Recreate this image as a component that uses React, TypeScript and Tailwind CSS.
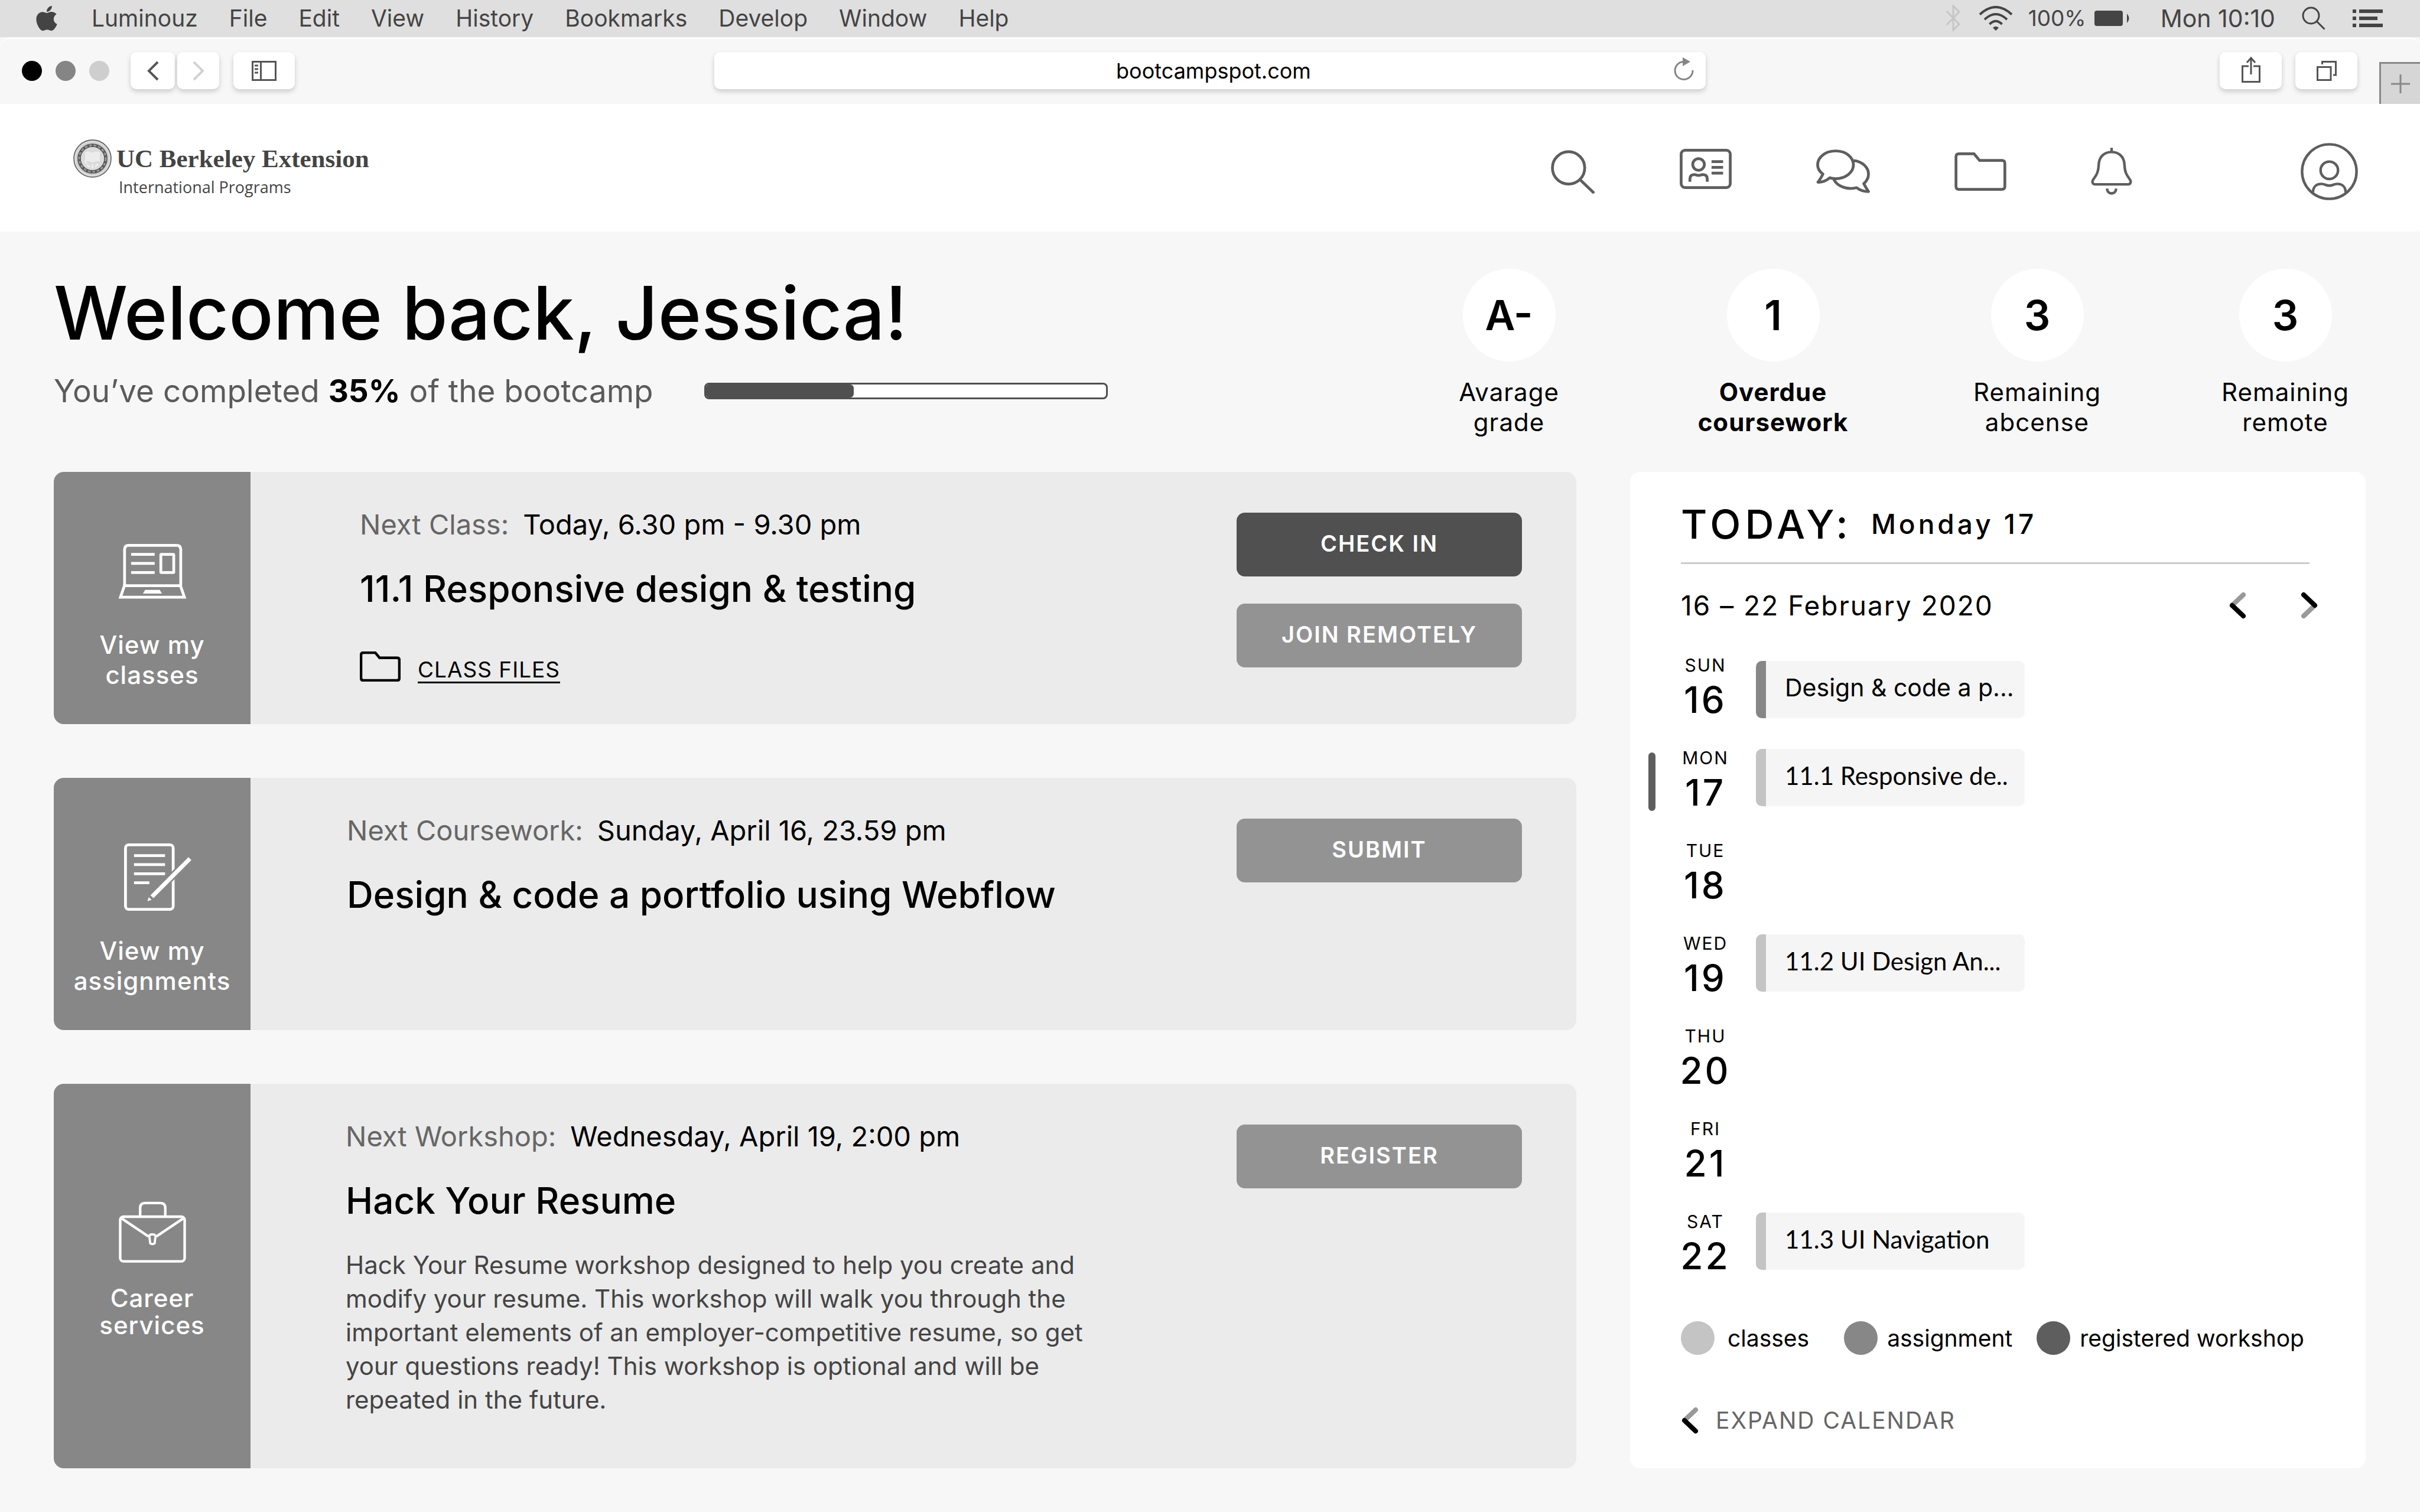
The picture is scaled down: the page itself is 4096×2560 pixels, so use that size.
import type { ReactNode } from 'react';
import { FaApple } from 'react-icons/fa';

const MENUS = ['File', 'Edit', 'View', 'History', 'Bookmarks', 'Develop', 'Window', 'Help'];

const DAYS = [
  { day: 'SUN', date: '16', event: 'Design & code a p...', kind: 'assignment' },
  { day: 'MON', date: '17', event: '11.1 Responsive de..', kind: 'class', current: true },
  { day: 'TUE', date: '18' },
  { day: 'WED', date: '19', event: '11.2 UI Design An...', kind: 'class' },
  { day: 'THU', date: '20' },
  { day: 'FRI', date: '21' },
  { day: 'SAT', date: '22', event: '11.3 UI Navigation', kind: 'class' },
];

const FOLDER =
  'M8 2.6H35L45 14.5H85q5.4 0 5.4 5.4V61q0 5.4-5.4 5.4H8q-5.4 0-5.4-5.4V8q0-5.4 5.4-5.4Z';

function MenuBar() {
  return (
    <div className="flex h-[63px] items-center bg-[#dfdfdf] pb-[2px] pl-[59px] pr-[63px] text-[39px] leading-[60px] text-[#444]">
      <FaApple className="mr-[56px] h-[48px] w-[40px]" />
      <nav className="flex gap-[53px]">
        <span>Luminouz</span>
        {MENUS.map((m) => (
          <button key={m} type="button">{m}</button>
        ))}
      </nav>
      <div className="ml-auto flex items-center">
        <svg className="h-[45px] w-[26px] text-[#c6c6c6]" viewBox="0 0 26 45" fill="none" stroke="currentColor" strokeWidth="3">
          <path d="M2 11L23 33L13 43V2L23 12L2 34" />
        </svg>
        <svg className="ml-[30px] h-[42px] w-[58px]" viewBox="0 0 58 42" fill="none" stroke="currentColor" strokeWidth="4">
          <path d="M2 14.5Q29-10.500 56 14.500M10 23Q29 5 48 23M18.500 31Q29 20.500 39.500 31" />
          <path d="M29 42l-5-5q5-4.500 10 0z" fill="currentColor" stroke="none" />
        </svg>
        <span className="ml-[26px] text-[37px]">100%</span>
        <svg className="ml-[14px] h-[26px] w-[62px]" viewBox="0 0 62 26" fill="currentColor">
          <rect width="48" height="26" rx="4" />
          <path d="M55 5q7 8 0 16z" />
        </svg>
        <span className="ml-[50px] text-[41px]">Mon 10:10</span>
        <button type="button" aria-label="Spotlight" className="ml-[45px]">
          <svg className="h-[40px] w-[40px]" viewBox="0 0 40 40" fill="none" stroke="currentColor" strokeWidth="3">
            <circle cx="15.500" cy="15.500" r="13.500" />
            <path d="M25 25L38.500 38.500" />
          </svg>
        </button>
        <button type="button" aria-label="Notification list" className="ml-[46px]">
          <svg className="h-[30px] w-[51px]" viewBox="0 0 51 30" fill="currentColor">
            <path d="M0 0h6v6H0zM11 0h40v6H11zM0 12h6v6H0zM11 12h31v6H11zM0 24h6v6H0zM11 24h40v6H11z" />
          </svg>
        </button>
      </div>
    </div>
  );
}

function ToolButton({ label, width, children }: { label: string; width: string; children: ReactNode }) {
  return (
    <button
      type="button"
      aria-label={label}
      className={`flex h-[63px] items-center justify-center rounded-[10px] bg-white text-[#555] shadow-[0_4px_8px_rgba(0,0,0,0.18)] ${width}`}
    >
      {children}
    </button>
  );
}

function BrowserBar() {
  return (
    <div className="flex h-[113px] items-start rounded-t-[18px] border-t-[3px] border-[#fcfcfc] bg-[#f7f7f7]">
      <div className="flex flex-1 items-center pt-[22px]">
        <div className="ml-[37px] flex gap-[23px]">
          <span className="size-[34px] rounded-full bg-black" />
          <span className="size-[34px] rounded-full bg-[#858585]" />
          <span className="size-[34px] rounded-full bg-[#cecece]" />
        </div>
        <div className="ml-[36px] flex gap-1">
          <ToolButton label="Back" width="w-[75px]">
            <svg className="h-[34px] w-[20px]" viewBox="0 0 20 34" fill="none" stroke="currentColor" strokeWidth="4">
              <path d="M18 2L3 17L18 32" />
            </svg>
          </ToolButton>
          <ToolButton label="Forward" width="w-[71px]">
            <svg className="h-[34px] w-[20px] text-[#d2d2d2]" viewBox="0 0 20 34" fill="none" stroke="currentColor" strokeWidth="4">
              <path d="M2 2L17 17L2 32" />
            </svg>
          </ToolButton>
        </div>
        <div className="ml-6">
          <ToolButton label="Sidebar" width="w-[104px]">
            <svg className="h-[34px] w-[42px]" viewBox="0 0 42 34" fill="none" stroke="currentColor" strokeWidth="3">
              <rect x="1.500" y="1.500" width="39" height="31" />
              <path d="M15.500 2V32M5 8h6M5 14h6M5 20h6" />
            </svg>
          </ToolButton>
        </div>
      </div>
      <div className="relative mt-[22px] w-[1678px]">
        <input
          aria-label="Address"
          defaultValue="bootcampspot.com"
          className="h-[63px] w-full rounded-[10px] bg-white pl-3 text-center text-[36px] text-black shadow-[0_4px_8px_rgba(0,0,0,0.18)] outline-none"
        />
        <button type="button" aria-label="Reload" className="absolute right-[20px] top-[9px] text-[#858585]">
          <svg className="h-[40px] w-[34px]" viewBox="0 0 34 40" fill="none" stroke="currentColor" strokeWidth="3">
            <path d="M32 22A15 15 0 1 1 17 7.500H20" />
            <path d="M15 0L28 7.500L15 15z" fill="currentColor" stroke="none" />
          </svg>
        </button>
      </div>
      <div className="flex flex-1 items-start justify-end">
        <div className="mr-[37px] mt-[22px] flex gap-[23px]">
          <ToolButton label="Share" width="w-[105px]">
            <svg className="mb-1 h-[44px] w-[32px]" viewBox="0 0 32 44" fill="none" stroke="currentColor" strokeWidth="3">
              <path d="M12 16H1.500V42.500H30.500V16H20M16 30V2M9 10L16 2L23 10" />
            </svg>
          </ToolButton>
          <ToolButton label="Tabs" width="w-[105px]">
            <svg className="h-[34px] w-[34px]" viewBox="0 0 34 34" fill="none" stroke="currentColor" strokeWidth="3">
              <path d="M1.500 10.500H24V32.500H1.500zM9.500 6V1.500H32.500V24H28" />
            </svg>
          </ToolButton>
        </div>
        <button
          type="button"
          aria-label="New tab"
          className="mt-[39px] flex h-[71px] w-[69px] items-center justify-center border-l-[3px] border-t-[3px] border-[#888] bg-[#d6d6d6]"
        >
          <svg className="h-[32px] w-[32px]" viewBox="0 0 32 32" fill="none" stroke="#888" strokeWidth="3">
            <path d="M16 0V32M0 16H32" />
          </svg>
        </button>
      </div>
    </div>
  );
}

function Seal() {
  return (
    <svg className="size-[65px]" viewBox="0 0 68 68" fill="none">
      <circle cx="34" cy="34" r="33" fill="#cfcfcf" stroke="#555" strokeWidth="1.500" />
      <circle cx="34" cy="34" r="30" stroke="#eee" strokeWidth="1.500" strokeDasharray="2 1.500" />
      <circle cx="34" cy="34" r="23.500" stroke="#555" strokeWidth="6" />
      <circle cx="34" cy="34" r="23.500" stroke="#999" strokeWidth="3" strokeDasharray="5 3" />
      <circle cx="34" cy="34" r="20.500" fill="#dcdcdc" />
      <path d="M20 22q7-3 14 1q7-4 14-1v18q-7-2-14 2q-7-4-14-2z" fill="#ececec" stroke="#d0d0d0" strokeWidth="1" />
      <path d="M24 45l5 4M34 44v7M44 43l-5 6M20 38l4 5" stroke="#f6f6f6" strokeWidth="2" />
    </svg>
  );
}

function SiteHeader() {
  return (
    <header className="flex h-[216px] items-center bg-white pl-[124px] pr-[105px]">
      <a href="#home" className="flex items-start gap-[8px] text-[#444]">
        <Seal />
        <span className="flex flex-col">
          <span className="font-['Liberation_Serif'] text-[43px] font-bold leading-[66px]">UC Berkeley Extension</span>
          <span className="pl-1 font-['Open_Sans'] text-[27px] leading-[30px]">International Programs</span>
        </span>
      </a>
      <nav className="ml-auto flex items-center gap-[143px] pt-3 text-[#5e5e5e]">
        <button type="button" aria-label="Search">
          <svg className="h-[75px] w-[75px]" viewBox="0 0 79 79" fill="none" stroke="currentColor" strokeWidth="5">
            <circle cx="31.500" cy="33" r="28.800" />
            <path d="M52 54L77 78" />
          </svg>
        </button>
        <button type="button" aria-label="Profile card" className="-mt-2">
          <svg className="h-[68px] w-[88px]" viewBox="0 0 93 72" fill="none" stroke="currentColor" strokeWidth="5">
            <rect x="2.500" y="2.500" width="88" height="67" rx="7" />
            <circle cx="33.700" cy="28" r="10.400" />
            <path d="M18.200 59V54.500Q18.200 46.300 26 46.300C30 46.300 30.500 47.600 33.700 47.600S37.500 46.300 41.500 46.300Q49.300 46.300 49.300 54.500V59M57 23H77.700M57 33.300H77.700M57 43.600H77.700" />
          </svg>
        </button>
        <button type="button" aria-label="Messages">
          <svg className="h-[74px] w-[91px]" viewBox="0 0 96 78" fill="none" stroke="currentColor" strokeWidth="5" strokeLinejoin="round">
            <path d="M24.300 50.600C18 56 11 59 3 58.500C6 55 9.500 49 12 44C6 39.500 2.600 33.500 2.600 27.400C2.600 13.700 16.900 2.600 34.700 2.600S66.500 13.700 66.500 27.400S52.300 52.200 34.700 52.200C31 52.200 27.500 51.600 24.300 50.600Z" />
            <path d="M67 19.800C82 21.500 93.400 31.500 93.400 44C93.400 50.500 90.300 56.500 85 61C87.500 66 91 71.500 93.400 75.200C86 75.200 78.500 73 72.300 68.300C54 73 37 65 31.500 53.500" />
          </svg>
        </button>
        <button type="button" aria-label="Files">
          <svg className="h-[65px] w-[88px]" viewBox="0 0 93 69" fill="none" stroke="currentColor" strokeWidth="5">
            <path d={FOLDER} />
          </svg>
        </button>
        <button type="button" aria-label="Notifications">
          <svg className="h-[80px] w-[70px]" viewBox="0 0 74 84" fill="none" stroke="currentColor" strokeWidth="4.600">
            <path d="M37 7.500C23 7.500 14.500 17 14 30C13.500 46 8 51 4 57C1.500 61 3 65.400 7.500 65.400H66.500C71 65.400 72.500 61 70 57C66 51 60.500 46 60 30C59.500 17 51 7.500 37 7.500ZM37 0V8M29 73C29 84.500 45 84.500 45 73" />
          </svg>
        </button>
        <button type="button" aria-label="Account" className="ml-[142px]">
          <svg className="h-[97px] w-[97px]" viewBox="0 0 102 102" fill="none" stroke="currentColor" strokeWidth="4.600">
            <circle cx="51" cy="51" r="48.500" />
            <circle cx="51" cy="48.700" r="15.500" />
            <path d="M22 88C22 78 28 73 37 73C43 73 45 76 51 76S59 73 65 73C74 73 80 78 80 88" />
          </svg>
        </button>
      </nav>
    </header>
  );
}

function Stat({ value, first, second, strong, gap }: { value: string; first: string; second: string; strong?: boolean; gap?: string }) {
  return (
    <div className={`flex w-[252px] flex-col items-center ${gap ?? ''}`}>
      <div className="flex size-[157px] items-center justify-center rounded-full bg-white text-[70px] font-semibold">{value}</div>
      <p className={`mt-[26px] whitespace-nowrap text-center text-[42px] leading-[51px] tracking-[1px] ${strong ? 'font-bold' : ''}`}>
        {first}
        <br />
        {second}
      </p>
    </div>
  );
}

function Welcome() {
  return (
    <section className="flex justify-between pr-[10px]">
      <div className="pt-[15px]">
        <h1 className="text-[125px] font-medium leading-[120px]">Welcome back, Jessica!</h1>
        <div className="mt-[42px] flex items-center gap-[86px]">
          <p className="text-[53px] leading-[60px] text-[#5a5a5a]">
            You’ve completed <strong className="font-bold text-black">35%</strong> of the bootcamp
          </p>
          <div
            role="progressbar"
            aria-label="Bootcamp progress"
            aria-valuenow={35}
            className="h-[28px] w-[683px] overflow-hidden rounded-[8px] border-[3px] border-[#505050] bg-white"
          >
            <div className="h-full w-[37%] rounded-r-[6px] bg-[#505050]" />
          </div>
        </div>
      </div>
      <div className="flex">
        <Stat value="A-" first="Avarage" second="grade" gap="mr-[195px]" />
        <Stat value="1" first="Overdue" second="coursework" strong gap="mr-[195px]" />
        <Stat value="3" first="Remaining" second="abcense" gap="mr-[168px]" />
        <Stat value="3" first="Remaining" second="remote" />
      </div>
    </section>
  );
}

function LaptopIcon() {
  return (
    <svg className="h-[93px] w-[114px]" viewBox="0 0 120 98" fill="none" stroke="currentColor" strokeWidth="5">
      <path d="M10.300 74V10q0-7.500 7.500-7.500H103q7.500 0 7.500 7.500V74" />
      <path d="M10 74.500H110L117 95H3ZM22 18.500H64M22 34.700H64M22 51H64" />
      <rect x="75" y="18.500" width="23" height="32.500" rx="1" />
      <path d="M47 82H73L77 88.500H43Z" fill="currentColor" stroke="none" />
    </svg>
  );
}

function NotesIcon() {
  return (
    <svg className="ml-[18px] h-[114px] w-[114px]" viewBox="0 0 120 120" fill="none" stroke="currentColor" strokeWidth="5">
      <rect x="2.500" y="2.500" width="85" height="115" rx="6" />
      <path d="M17.700 21.700H73M17.700 37.700H73M17.700 54H73M17.700 70H45" />
      <path d="M95 49.500L75 69.500" stroke="#878787" strokeWidth="13" />
      <path d="M117.300 27L49.700 95" strokeWidth="7.400" />
      <path d="M41.500 103L44 95.700L49 100.700Z" fill="currentColor" stroke="none" />
    </svg>
  );
}

function BriefcaseIcon() {
  return (
    <svg className="h-[104px] w-[114px]" viewBox="0 0 120 110" fill="none" stroke="currentColor" strokeWidth="4.600">
      <path d="M38 27V12q0-9 9-9h27q9 0 9 9V27" />
      <rect x="2.300" y="27.500" width="115.400" height="80" rx="6" />
      <path d="M4 30L53 63M116 30L67 63" />
      <path d="M54.500 63q0-4 5.500-4t5.500 4l-1.500 12q-4 3-8 0z" strokeWidth="4" />
    </svg>
  );
}

type CardProps = {
  tab: [string, string];
  tabClass: string;
  labelClass: string;
  icon: ReactNode;
  label: string;
  when: string;
  title: string;
  bodyClass: string;
  actions: { text: string; primary?: boolean }[];
  children?: ReactNode;
};

function Card({ tab, tabClass, labelClass, icon, label, when, title, bodyClass, actions, children }: CardProps) {
  return (
    <article className="flex min-h-[427px] overflow-hidden rounded-[17px] bg-[#ebebeb]">
      <a
        href="#section"
        className={`flex w-[333px] shrink-0 flex-col items-center bg-[#878787] text-center text-[42px] font-medium tracking-[1px] text-white ${tabClass}`}
      >
        {icon}
        <span className={labelClass}>
          {tab[0]}
          <br />
          {tab[1]}
        </span>
      </a>
      <div className={`flex-1 pt-[59px] ${bodyClass}`}>
        <p className="flex gap-[24px] whitespace-nowrap text-[47px] leading-[60px]">
          <span className="text-[#666]">{label}</span>
          <span>{when}</span>
        </p>
        <h2 className="mt-[39px] whitespace-nowrap text-[62px] font-medium leading-[80px]">{title}</h2>
        {children}
      </div>
      <div className="mr-[92px] flex w-[483px] shrink-0 flex-col gap-[46px] pt-[69px]">
        {actions.map((a) => (
          <button
            key={a.text}
            type="button"
            className={`h-[108px] rounded-[14px] pb-1 text-[38px] font-semibold tracking-[2px] text-white ${a.primary ? 'bg-[#505050]' : 'bg-[#939393]'}`}
          >
            {a.text}
          </button>
        ))}
      </div>
    </article>
  );
}

function Chevron({ right }: { right?: boolean }) {
  return (
    <svg className="h-[46px] w-[30px]" viewBox="0 0 30 46" fill="none" strokeWidth="8" strokeLinecap="round">
      {right ? (
        <>
          <path d="M24 23L5 41" stroke="#999" />
          <path d="M5 5L24 23" stroke="#000" />
        </>
      ) : (
        <>
          <path d="M25 5L6 23" stroke="#999" />
          <path d="M6 23L25 41" stroke="#000" />
        </>
      )}
    </svg>
  );
}

function Calendar() {
  return (
    <aside className="w-[1245px] shrink-0 rounded-[17px] bg-white pb-[57px] pl-[86px] pr-[80px] pt-[48px]">
      <h2 className="flex items-center gap-[32px] leading-[80px]">
        <span className="text-[68px] font-medium tracking-[7px]">TODAY:</span>
        <span className="text-[46px] font-medium tracking-[5px]">Monday 17</span>
      </h2>
      <hr className="mr-[15px] mt-[25px] border-t-[3px] border-[#ccc]" />
      <div className="mt-[40px] flex items-center justify-between">
        <p className="text-[46px] leading-[60px] tracking-[2px]">16 – 22 February 2020</p>
        <div className="flex gap-[92px]">
          <button type="button" aria-label="Previous week"><Chevron /></button>
          <button type="button" aria-label="Next week"><Chevron right /></button>
        </div>
      </div>
      <ul className="mt-[53px]">
        {DAYS.map((d, i) => (
          <li key={d.day} className="relative flex h-[157px] items-start gap-[44px]">
            {d.current && <span className="absolute -left-[55px] top-[9px] h-[99px] w-[12px] rounded-full bg-[#5e5e5e]" />}
            <div className="flex w-[83px] flex-col items-center">
              <span className="text-[30px] leading-9 tracking-[2px]">{d.day}</span>
              <span className="mt-[6px] text-[62px] font-medium leading-[70px] tracking-[4px]">{d.date}</span>
            </div>
            {d.event && (
              <a
                href="#event"
                className={`flex h-[97px] w-[455px] items-center overflow-hidden whitespace-nowrap rounded-[10px] border-l-[17px] bg-[#f5f5f5] pb-[6px] pl-[32px] ${
                  d.kind === 'class' ? "border-[#c4c4c4] font-['Lato'] text-[42px]" : 'border-[#878787] text-[41px]'
                } ${i === 0 ? 'mt-[11px]' : 'mt-[3px]'}`}
              >
                {d.event}
              </a>
            )}
          </li>
        ))}
      </ul>
      <ul className="mt-[30px] flex items-center whitespace-nowrap text-[39px] leading-[56px]">
        <li className="mr-[59px] flex items-center gap-[22px]">
          <span className="size-[57px] rounded-full bg-[#c4c4c4]" />
          classes
        </li>
        <li className="mr-[41px] flex items-center gap-4">
          <span className="size-[57px] rounded-full bg-[#878787]" />
          assignment
        </li>
        <li className="flex items-center gap-4">
          <span className="size-[57px] rounded-full bg-[#5e5e5e]" />
          registered workshop
        </li>
      </ul>
      <button type="button" className="mt-[88px] flex items-center gap-[29px] text-[39px] leading-[46px] tracking-[2px] text-[#666]">
        <Chevron />
        EXPAND CALENDAR
      </button>
    </aside>
  );
}

export default function App() {
  return (
    <div className="min-h-screen bg-[#f7f7f7] font-['Inter',sans-serif] text-black">
      <MenuBar />
      <BrowserBar />
      <SiteHeader />
      <main className="pb-[73px] pl-[91px] pr-[92px] pt-[63px]">
        <Welcome />
        <div className="mt-[59px] flex gap-[91px]">
          <div className="flex min-w-0 flex-1 flex-col gap-[91px]">
            <Card
              tab={['View my', 'classes']}
              tabClass="pt-[122px]"
              labelClass="mt-[52px] leading-[51px]"
              icon={<LaptopIcon />}
              label="Next Class:"
              when="Today, 6.30 pm - 9.30 pm"
              title="11.1 Responsive design & testing"
              bodyClass="pl-[185px]"
              actions={[{ text: 'CHECK IN', primary: true }, { text: 'JOIN REMOTELY' }]}
            >
              <div className="mt-[66px] flex items-end gap-[29px]">
                <svg className="mb-[3px] h-[51px] w-[69px]" viewBox="0 0 93 69" fill="none" stroke="currentColor" strokeWidth="6">
                  <path d={FOLDER} />
                </svg>
                <a href="#files" className="border-b-[3px] border-black text-[37px] leading-[40px] tracking-[1px]">CLASS FILES</a>
              </div>
            </Card>
            <Card
              tab={['View my', 'assignments']}
              tabClass="pt-[111px]"
              labelClass="mt-[42px] leading-[51px]"
              icon={<NotesIcon />}
              label="Next Coursework:"
              when="Sunday, April 16, 23.59 pm"
              title="Design & code a portfolio using Webflow"
              bodyClass="pl-[163px]"
              actions={[{ text: 'SUBMIT' }]}
            />
            <Card
              tab={['Career', 'services']}
              tabClass="pt-[199px]"
              labelClass="mt-[37px] leading-[46px]"
              icon={<BriefcaseIcon />}
              label="Next Workshop:"
              when="Wednesday, April 19, 2:00 pm"
              title="Hack Your Resume"
              bodyClass="pl-[161px] pb-[88px]"
              actions={[{ text: 'REGISTER' }]}
            >
              <p className="mt-[40px] whitespace-nowrap text-[42px] leading-[57px] text-[#444]">
                Hack Your Resume workshop designed to help you create and
                <br />
                modify your resume. This workshop will walk you through the
                <br />
                important elements of an employer-competitive resume, so get
                <br />
                your questions ready! This workshop is optional and will be
                <br />
                repeated in the future.
              </p>
            </Card>
          </div>
          <Calendar />
        </div>
      </main>
    </div>
  );
}
